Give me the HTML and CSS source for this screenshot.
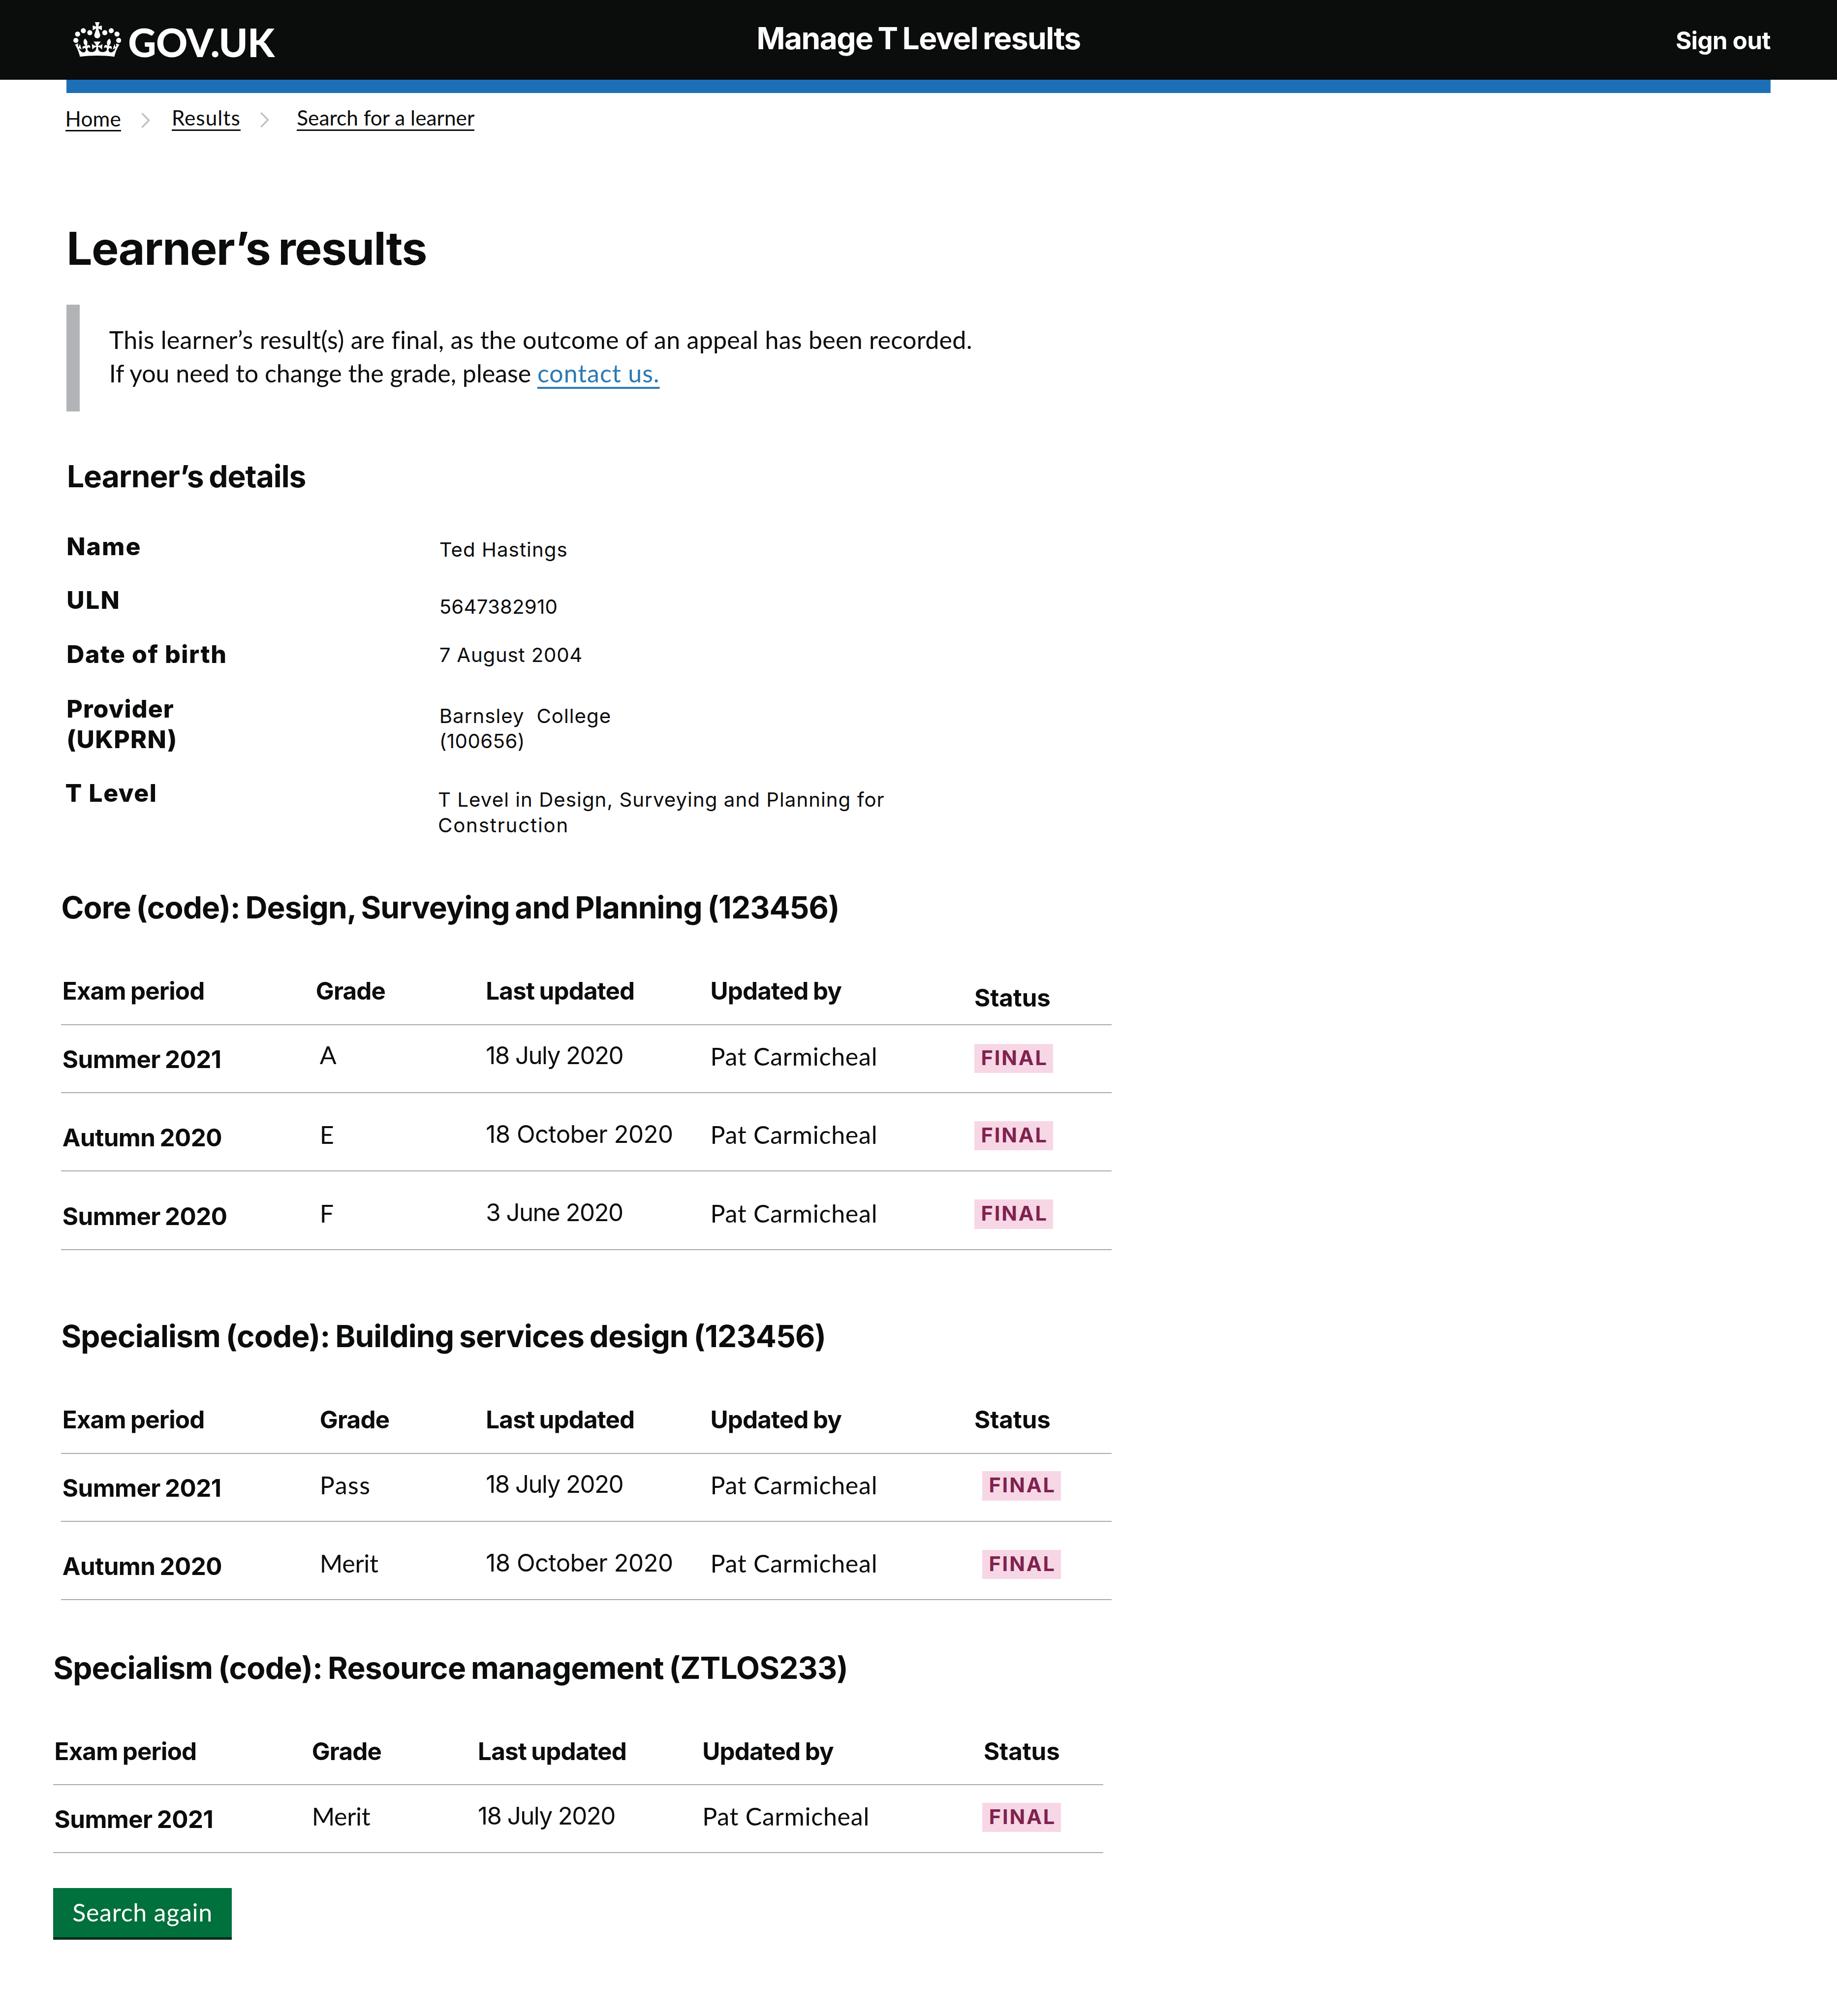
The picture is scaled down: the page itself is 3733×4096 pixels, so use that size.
FILE: index.html
```html
<!DOCTYPE html>
<html lang="en">
<head>
<meta charset="utf-8">
<title>Manage T Level results</title>
<link rel="stylesheet" href="styles.css">
</head>
<body>
<header class="header">
  <a class="logo">
    <svg class="logo__crown" viewBox="0 0 132 97" preserveAspectRatio="none" aria-hidden="true"><path fill="currentColor" fill-rule="evenodd" d="M25 30.2c3.5 1.5 7.7-.2 9.1-3.7 1.5-3.6-.2-7.8-3.9-9.2-3.6-1.4-7.6.3-9.1 3.9-1.4 3.5.3 7.5 3.9 9zM9 39.5c3.6 1.5 7.8-.2 9.2-3.7 1.5-3.6-.2-7.8-3.9-9.1-3.6-1.5-7.6.2-9.1 3.8-1.4 3.5.3 7.5 3.8 9zM4.4 57.2c3.5 1.5 7.7-.2 9.1-3.8 1.5-3.6-.2-7.7-3.9-9.1-3.5-1.5-7.6.3-9.1 3.8-1.4 3.5.3 7.6 3.9 9.1zm38.3-21.4c3.5 1.5 7.7-.2 9.1-3.8 1.5-3.6-.2-7.7-3.9-9.1-3.6-1.5-7.6.3-9.1 3.8-1.3 3.6.4 7.7 3.9 9.1zm64.4-5.6c-3.6 1.5-7.8-.2-9.1-3.7-1.5-3.6.2-7.8 3.8-9.2 3.6-1.4 7.7.3 9.2 3.9 1.3 3.5-.4 7.5-3.9 9zm15.9 9.3c-3.6 1.5-7.7-.2-9.1-3.7-1.5-3.6.2-7.8 3.7-9.1 3.6-1.5 7.7.2 9.2 3.8 1.5 3.5-.3 7.5-3.8 9zm4.7 17.7c-3.6 1.5-7.8-.2-9.2-3.8-1.5-3.6.2-7.7 3.9-9.1 3.6-1.5 7.7.3 9.2 3.8 1.3 3.5-.4 7.6-3.9 9.1zM89.3 35.8c-3.6 1.5-7.8-.2-9.2-3.8-1.4-3.6.2-7.7 3.9-9.1 3.6-1.5 7.7.3 9.2 3.8 1.4 3.6-.3 7.7-3.9 9.1zM69.7 17.7l8.9 4.7V9.3l-8.9 2.8c-.2-.3-.5-.6-.9-.9L72.4 0H59.6l3.5 11.2c-.3.3-.6.5-.9.9l-8.8-2.8v13.1l8.8-4.7c.3.3.6.7.9.9l-5 15.4v.1c-.2.8-.4 1.6-.4 2.4 0 4.1 3.1 7.5 7 8.1h.2c.3 0 .7.1 1 .1.4 0 .7 0 1-.1h.2c4-.6 7.1-4.1 7.1-8.1 0-.8-.1-1.7-.4-2.4V34l-5.1-15.4c.4-.2.7-.6 1-.9zM66 92.8c16.9 0 32.8 1.1 47.1 3.2 4-16.9 8.9-26.7 14-33.5l-9.6-3.4c1 4.9 1.1 7.2 0 10.2-1.5-1.4-3-4.3-4.2-8.7L108.6 76c2.8-2 5-3.2 7.5-3.3-4.4 9.4-10 11.9-13.6 11.2-4.3-.8-6.3-4.6-5.6-7.9 1-4.7 5.7-5.9 8-.5 4.3-8.7-3-11.4-7.6-8.8 7.1-7.2 7.9-13.5 2.1-21.1-8 6.1-8.1 12.3-4.5 20.8-4.7-5.4-12.1-2.5-9.5 6.2 3.4-5.2 7.9-2 7.2 3.1-.6 4.3-6.4 7.8-13.5 7.2-10.3-.9-10.9-8-11.2-13.8 2.5-.5 7.1 1.8 11 7.3L80.2 60c-4.1 4.4-8 5.3-12.3 5.4 1.4-4.4 8-11.6 8-11.6H55.5s6.4 7.2 7.9 11.6c-4.2-.1-8-1-12.3-5.4l1.4 16.4c3.9-5.5 8.5-7.7 10.9-7.3-.3 5.8-.9 12.8-11.1 13.8-7.2.6-12.9-2.9-13.5-7.2-.7-5 3.8-8.3 7.1-3.1 2.7-8.7-4.6-11.6-9.4-6.2 3.7-8.5 3.6-14.7-4.6-20.8-5.8 7.6-5 13.9 2.2 21.1-4.7-2.6-11.9.1-7.7 8.8 2.3-5.5 7.1-4.2 8.1.5.7 3.3-1.3 7.1-5.7 7.9-3.5.7-9-1.8-13.5-11.2 2.5.1 4.7 1.3 7.5 3.3l-4.7-15.4c-1.2 4.4-2.7 7.2-4.3 8.7-1.1-3-.9-5.3 0-10.2l-9.5 3.4c5 6.9 9.9 16.7 14 33.5 14.8-2.1 30.8-3.2 47.7-3.2z"/></svg>
    <span class="logo__text">GOV.UK</span>
  </a>
  <div class="header__service">Manage T Level results</div>
  <a class="header__signout">Sign out</a>
</header>
<div class="header-bar"></div>

<nav>
  <ol class="breadcrumbs">
    <li class="breadcrumbs__item breadcrumbs__item--home"><a class="breadcrumbs__link">Home</a><svg class="breadcrumbs__chevron" viewBox="0 0 26 46" aria-hidden="true"><path d="M2 1.5 23 23 2 44.5"/></svg></li>
    <li class="breadcrumbs__item breadcrumbs__item--results"><a class="breadcrumbs__link">Results</a><svg class="breadcrumbs__chevron" viewBox="0 0 26 46" aria-hidden="true"><path d="M2 1.5 23 23 2 44.5"/></svg></li>
    <li class="breadcrumbs__item breadcrumbs__item--search"><a class="breadcrumbs__link">Search for a learner</a></li>
  </ol>
</nav>

<main>
  <h1 class="title">Learner’s results</h1>
  <div class="inset"><span class="inset__line">This learner’s result(s) are final, as the outcome of an appeal has been recorded.</span><span class="inset__line inset__line--contact">If you need to change the grade, please <a class="inset__link">contact us.</a></span></div>

  <h2 class="heading heading--details">Learner’s details</h2>
  <dl class="details">
    <div class="details__row"><dt>Name</dt><dd>Ted Hastings</dd></div>
    <div class="details__row"><dt>ULN</dt><dd>5647382910</dd></div>
    <div class="details__row"><dt>Date of birth</dt><dd>7 August 2004</dd></div>
    <div class="details__row"><dt>Provider<br><span class="details__ukprn">(UKPRN)</span></dt><dd>Barnsley&nbsp; College<br><span class="details__number">(100656)</span></dd></div>
    <div class="details__row"><dt>T Level</dt><dd>T Level in Design, Surveying and Planning for<br><span class="details__last">Construction</span></dd></div>
  </dl>

  <section class="results results--core">
    <h2 class="heading">Core (code): Design, Surveying and Planning (123456)</h2>
    <div class="results__head"><span>Exam period</span><span>Grade</span><span>Last updated</span><span>Updated by</span><span>Status</span></div>
    <div class="results__row"><b>Summer 2021</b><span>A</span><span class="date date--short">18 July 2020</span><span>Pat Carmicheal</span><strong class="tag">FINAL</strong></div>
    <div class="results__row"><b>Autumn 2020</b><span>E</span><span class="date">18 October 2020</span><span>Pat Carmicheal</span><strong class="tag">FINAL</strong></div>
    <div class="results__row"><b>Summer 2020</b><span>F</span><span class="date date--short">3 June 2020</span><span>Pat Carmicheal</span><strong class="tag">FINAL</strong></div>
  </section>

  <section class="results results--building">
    <h2 class="heading">Specialism (code): Building services design (123456)</h2>
    <div class="results__head"><span>Exam period</span><span>Grade</span><span>Last updated</span><span>Updated by</span><span>Status</span></div>
    <div class="results__row"><b>Summer 2021</b><span class="pass">Pass</span><span class="date date--short">18 July 2020</span><span>Pat Carmicheal</span><strong class="tag">FINAL</strong></div>
    <div class="results__row"><b>Autumn 2020</b><span class="merit">Merit</span><span class="date">18 October 2020</span><span>Pat Carmicheal</span><strong class="tag">FINAL</strong></div>
  </section>

  <section class="results results--resource">
    <h2 class="heading">Specialism (code): Resource management (ZTLOS233)</h2>
    <div class="results__head"><span>Exam period</span><span>Grade</span><span>Last updated</span><span>Updated by</span><span>Status</span></div>
    <div class="results__row"><b>Summer 2021</b><span class="merit">Merit</span><span class="date date--short">18 July 2020</span><span>Pat Carmicheal</span><strong class="tag">FINAL</strong></div>
  </section>

  <button class="button" type="button">Search again</button>
</main>
</body>
</html>
```
FILE: styles.css
```css
/* The page is 55.2rem wide at every window size. */
html { font-size: calc(100vw / 55.2); }

*, *::before, *::after { box-sizing: border-box; }

body {
  margin: 0;
  background: #fff;
  color: #0b0c0c;
  font-family: Lato, sans-serif;
  font-size: .742rem;
  line-height: 1rem;
  white-space: nowrap;
  overflow: hidden;
}

h1, h2, dl, dd, ol { margin: 0; padding: 0; }

/* Header */
.header {
  display: grid;
  grid-template-columns: 1fr auto 1fr;
  align-items: start;
  height: 2.4rem;
  padding: 0 2rem 0 2.2rem;
  background: #0b0c0c;
  color: #fff;
  font-family: Inter, sans-serif;
  font-weight: 700;
}
.logo { display: flex; gap: .21rem; padding-top: .67rem; }
.logo__crown { width: 1.44rem; height: 1.05rem; }
.logo__text {
  font-family: Lato, sans-serif;
  font-size: 1.172rem;
  font-weight: 900;
  line-height: 1.2rem;
  letter-spacing: -.01em;
}
.header__service {
  padding-top: .548rem;
  margin-left: -.2rem;
  font-size: .92rem;
  line-height: 1.2rem;
  letter-spacing: -.025em;
  word-spacing: -.05em;
}
.header__signout { justify-self: end; padding-top: .727rem; font-size: .729rem; letter-spacing: -.014em; }
.header-bar { height: .4rem; margin: 0 2rem; background: #1d70b8; }

/* Breadcrumbs */
.breadcrumbs {
  display: flex;
  align-items: flex-start;
  height: 1.15rem;
  padding: .323rem 0 0 1.96rem;
  list-style: none;
  font-size: .625rem;
  line-height: .82rem;
}
.breadcrumbs__item { display: flex; align-items: flex-start; }
.breadcrumbs__item--home { width: 3.2rem; margin-top: .02rem; letter-spacing: .006em; }
.breadcrumbs__item--results { width: 3.76rem; letter-spacing: .024em; }
.breadcrumbs__item--search { letter-spacing: .001em; }
.breadcrumbs__link { height: .812rem; border-bottom: .045rem solid #0b0c0c; }
.breadcrumbs__chevron {
  width: .26rem;
  height: .46rem;
  margin: .245rem 0 0 .6rem;
  fill: none;
  stroke: #bfc1c3;
  stroke-width: 5;
}

/* Headings */
.title {
  margin: 2.71rem 0 0 2rem;
  font-family: Inter, sans-serif;
  font-size: 1.37rem;
  line-height: 1.6rem;
  letter-spacing: -.0155em;
  word-spacing: -.05em;
}
.heading {
  font-family: Inter, sans-serif;
  font-size: .92rem;
  line-height: 1.2rem;
  letter-spacing: -.0145em;
  word-spacing: -.05em;
}
.heading--details { margin: 1.351rem 0 0 2.01rem; letter-spacing: -.016em; }

/* Inset text */
.inset {
  height: 3.2rem;
  margin: .9rem 0 0 2rem;
  padding: .546rem 0 0 .88rem;
  border-left: .4rem solid #b1b4b6;
  letter-spacing: .005em;
}
.inset__line { display: block; }
.inset__line--contact { letter-spacing: -.001em; }
.inset__link {
  color: #2b7ab5;
  letter-spacing: .018em;
  text-decoration: underline;
  text-decoration-thickness: .055rem;
  text-decoration-skip-ink: none;
  text-underline-offset: .14rem;
}

/* Learner details */
.details { margin: 1.046rem 0 0 2rem; font-family: Inter, sans-serif; }
.details__row { display: grid; grid-template-columns: 11.2rem 1fr; height: 1.63rem; }
.details dt { font-size: .74rem; line-height: .92rem; font-weight: 800; letter-spacing: .03em; }
.details dd { font-size: .595rem; line-height: .76rem; letter-spacing: .026em; }
.details .details__ukprn { letter-spacing: .024em; }
.details .details__number { letter-spacing: .011em; }
.details .details__last { letter-spacing: .045em; }

.details__row:nth-child(1) { height: 1.605rem; }
.details__row:nth-child(1) dt { letter-spacing: .04em; }
.details__row:nth-child(1) dd { padding-top: .18rem; }
.details__row:nth-child(2) dt { letter-spacing: .047em; }
.details__row:nth-child(2) dd { padding-top: .287rem; letter-spacing: .005em; }
.details__row:nth-child(3) { height: 1.646rem; }
.details__row:nth-child(3) dd { padding-top: .1rem; letter-spacing: .02em; }
.details__row:nth-child(4) { height: 2.524rem; }
.details__row:nth-child(4) dt { letter-spacing: .021em; }
.details__row:nth-child(4) dd { padding-top: .294rem; }
.details__row:nth-child(5) { height: 1.808rem; margin-left: -.04rem; }
.details__row:nth-child(5) dd { padding-top: .287rem; }

/* Result tables */
.results { width: 31.56rem; margin-left: 1.84rem; }
.results--core { margin-top: 1.498rem; }
.results--building { margin-top: 1.988rem; }
.results--resource { margin-top: 1.428rem; margin-left: 1.6rem; }
.results--building .heading { letter-spacing: -.0135em; }
.results--resource .heading { letter-spacing: -.0125em; }

.results__head,
.results__row {
  display: grid;
  grid-template-columns: 7.735rem 4.99rem 6.745rem 7.935rem 1fr;
  align-items: start;
  height: 2.36rem;
  padding: .747rem 0 0 .035rem;
  border-bottom: .04rem solid #a9a9a9;
}
.results__head {
  height: 2.932rem;
  padding-top: 1.417rem;
  font-family: Inter, sans-serif;
  font-size: .729rem;
  font-weight: 700;
  letter-spacing: -.0165em;
  word-spacing: -.03em;
}
.results__head :last-child { letter-spacing: -.003em; }
.results__head + .results__row { height: 2.04rem; padding-top: .427rem; }
.results__row { letter-spacing: .014em; }
.results__row b,
.results__row .date { font-family: Inter, sans-serif; font-size: .729rem; }
.results__row b { padding-top: .105rem; letter-spacing: -.011em; word-spacing: -.04em; }
.results__row .date { margin-top: -.01rem; letter-spacing: -.012em; }
.results__row .date--short { letter-spacing: -.032em; }
.results__row .merit { letter-spacing: -.007em; }
.results__row .pass { letter-spacing: .03em; }

.results--core .results__head :nth-child(2) { margin-left: -.12rem; }
.results--core .results__head :last-child { padding-top: .206rem; }
.results--core .results__head + .results__row :nth-child(2) { margin-top: -.04rem; }
.results--core .results__head + .results__row .tag { margin-top: .133rem; }
.results--building .tag { margin-left: .236rem; }
.results--resource .results__head :last-child { margin-left: .52rem; }
.results--resource .tag { margin-left: .48rem; }

.tag {
  width: 2.36rem;
  height: .88rem;
  margin-top: .093rem;
  padding-left: .198rem;
  background: #f7d7e6;
  color: #80224d;
  font-family: Inter, sans-serif;
  font-size: .614rem;
  line-height: .845rem;
  letter-spacing: .069em;
}

.button {
  display: block;
  width: 5.365rem;
  height: 1.56rem;
  margin: 1.04rem 0 0 1.6rem;
  padding: .217rem 0 .263rem;
  border: 0;
  border-bottom: .08rem solid #002d18;
  background: #00703c;
  color: #fff;
  font: inherit;
  line-height: 1rem;
  letter-spacing: .014em;
}
```
